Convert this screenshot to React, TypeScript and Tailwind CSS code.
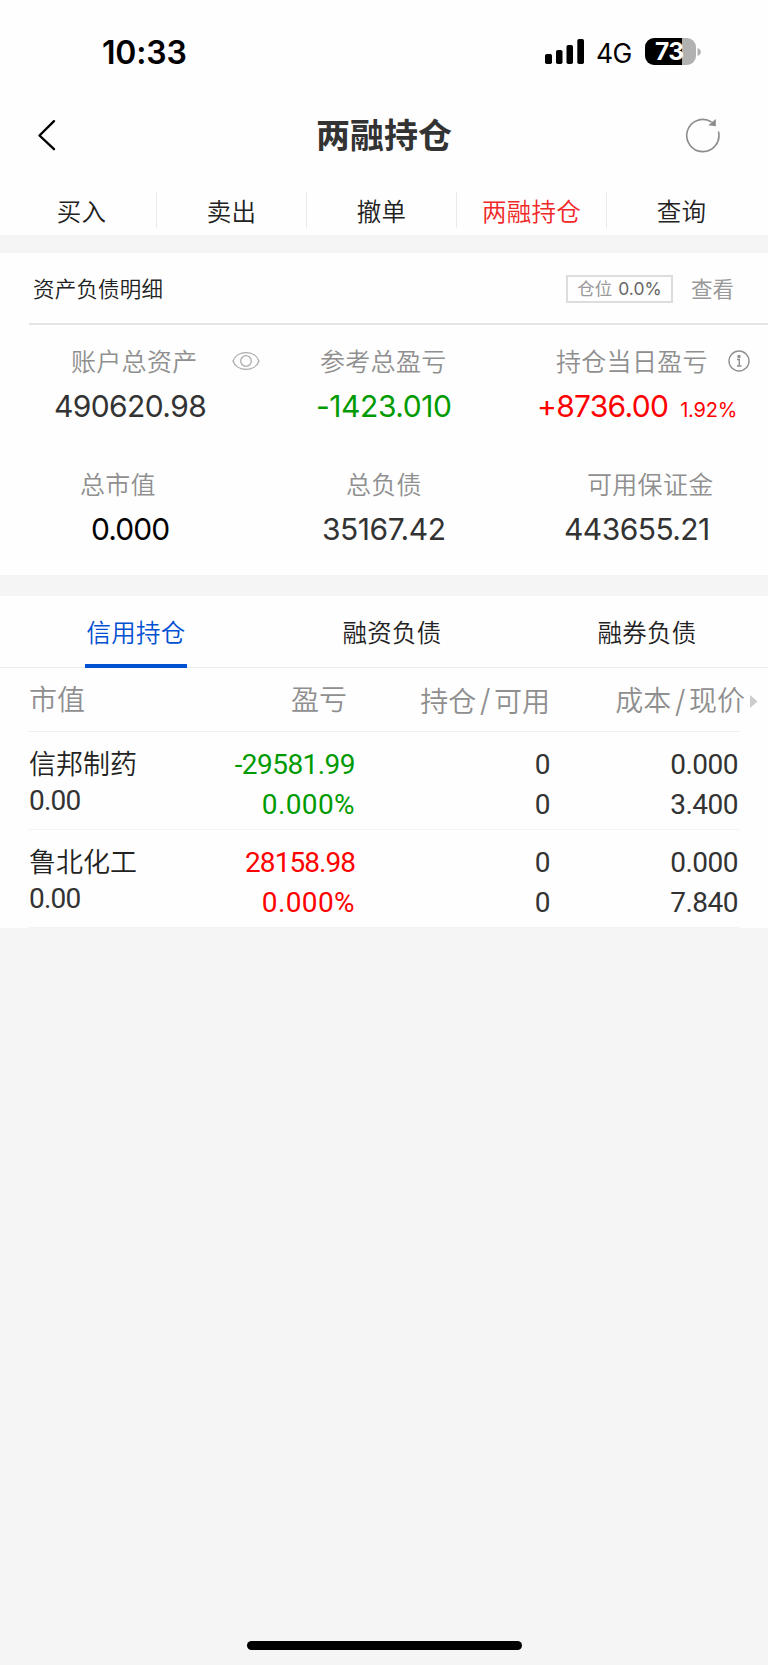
import { ReactNode } from "react";

const actions = ["买入", "卖出", "撤单", "两融持仓", "查询"];

const holdings = [
  { name: "信邦制药", value: "0.00", profit: "-29581.99", profitTracking: "tracking-[-0.550px]", rate: "0.000%", held: "0", usable: "0", cost: "0.000", price: "3.400", tone: "text-[#009b00]" },
  { name: "鲁北化工", value: "0.00", profit: "28158.98", profitTracking: "tracking-[-0.950px]", rate: "0.000%", held: "0", usable: "0", cost: "0.000", price: "7.840", tone: "text-[#ff0000]" },
];

function StatusBar() {
  return (
    <div className="flex h-[105px] items-start pl-[102px] pt-[32px]">
      <div className="w-[443px] text-[32px] font-semibold leading-[42px] tracking-[-0.200px] text-black">10:33</div>
      <svg className="mt-[7px] shrink-0" width="39" height="25" viewBox="0 0 39 25">
        <rect x="0" y="15" width="7" height="10" rx="1.8" />
        <rect x="11" y="11" width="6.5" height="14" rx="1.8" />
        <rect x="21.5" y="6" width="6.5" height="19" rx="1.8" />
        <rect x="32.3" y="0" width="6.7" height="25" rx="1.8" />
      </svg>
      <div className="ml-[12px] w-[49px] text-[26.500px] leading-[43px] tracking-[-0.5px] text-black">4G</div>
      <div className="mt-[6px] h-[27px] w-[51px] shrink-0 rounded-[9px] bg-[linear-gradient(to_right,#000_37px,#b1b1b1_37px)] pl-[10px] text-[24.500px] font-bold leading-[27px] tracking-[-0.500px] text-white">
        73
      </div>
      <svg className="ml-[1px] mt-[16px]" width="4" height="8" viewBox="0 0 4 8">
        <path d="M0.5 0C5 1.5 5 6.500 0.500 8Z" fill="#b1b1b1" />
      </svg>
    </div>
  );
}

function TitleBar() {
  return (
    <div className="flex h-[82px] items-start pl-[36px]">
      <svg className="mt-[13px]" width="20" height="34" viewBox="0 0 20 34" fill="none" stroke="#000" strokeWidth="2.400" strokeLinecap="round" strokeLinejoin="round">
        <path d="M18 3.200 3.500 17.500 18 31.200" />
      </svg>
      <h1 className="ml-[260px] w-[369px] text-[34px] font-bold leading-[62px] text-[#333]">两融持仓</h1>
      <svg className="mt-[13px]" width="36" height="36" viewBox="0 0 36 36" fill="none" stroke="#8c8c8c" strokeWidth="1.600">
        <path d="M33.400 13.500A16.100 16.100 0 1 1 26.500 4" />
        <path d="M30.800 1V8.300L23.300 7.300Z" fill="#8c8c8c" stroke="none" />
      </svg>
    </div>
  );
}

function Metric({ label, labelPad, valuePad, valueClass, icon, children }: { label: string; labelPad: string; valuePad: string; valueClass: string; icon?: ReactNode; children: ReactNode }) {
  return (
    <div className="w-[256px] shrink-0 whitespace-nowrap">
      <div className={`flex h-[40px] items-center text-[25px] font-[350] leading-[40px] tracking-[0.300px] text-[#8f8f8f] ${labelPad}`}>
        <span className="pt-[2px]">{label}</span>
        {icon}
      </div>
      <div className={`h-[48px] text-[30px] leading-[50px] ${valuePad} ${valueClass}`}>{children}</div>
    </div>
  );
}

function Eye() {
  return (
    <svg className="ml-[34px] shrink-0" width="28" height="20" viewBox="0 0 28 20" fill="none" stroke="#ababab" strokeWidth="1.300">
      <path d="M1 10C5-1.200 23-1.200 27 10 23 21.200 5 21.200 1 10Z" />
      <circle cx="14" cy="10" r="5.300" />
    </svg>
  );
}

function Info() {
  return (
    <svg className="ml-[20px] shrink-0" width="22" height="22" viewBox="0 0 22 22" fill="none" stroke="#909090" strokeWidth="1.400">
      <circle cx="11" cy="11" r="10" />
      <circle cx="11" cy="6.500" r="1.700" fill="#909090" stroke="none" />
      <path d="M9 9.500H11.300V16M9 16H13.500" />
    </svg>
  );
}

function Assets() {
  return (
    <section className="h-[322px] bg-[#fefefe]">
      <div className="ml-[29px] flex h-[72px] items-center border-b-2 border-[#e5e5e5] pl-[4px] pr-[34px] pt-[2px]">
        <h2 className="grow text-[21.500px] font-[350] tracking-[0.200px] text-[#222]">资产负债明细</h2>
        <div className="flex h-[28px] w-[107px] items-center justify-center gap-[6px] border-2 border-[#ddd] text-[17.500px] text-[#999]">
          <span>仓位</span>
          <span className="text-[#666]">0.0%</span>
        </div>
        <div className="ml-[18px] text-[21.500px] text-[#999]">查看</div>
      </div>
      <div className="flex pt-[16px]">
        <Metric label="账户总资产" labelPad="pl-[71px]" valuePad="pl-[54px]" valueClass="text-[#333] tracking-[-0.600px]" icon={<Eye />}>490620.98</Metric>
        <Metric label="参考总盈亏" labelPad="pl-[64px]" valuePad="pl-[60px]" valueClass="text-[#009b00] tracking-[-0.450px]">-1423.010</Metric>
        <Metric label="持仓当日盈亏" labelPad="pl-[44px]" valuePad="pl-[25px]" valueClass="text-[#ff0000] tracking-[-0.700px]" icon={<Info />}>
          +8736.00<span className="ml-[12px] text-[20px] tracking-[-0.200px]">1.92%</span>
        </Metric>
      </div>
      <div className="flex pt-[35px]">
        <Metric label="总市值" labelPad="pl-[80px]" valuePad="pl-[91px]" valueClass="text-black tracking-[-0.900px]">0.000</Metric>
        <Metric label="总负债" labelPad="pl-[90px]" valuePad="pl-[66px]" valueClass="text-[#333] tracking-[-0.450px]">35167.42</Metric>
        <Metric label="可用保证金" labelPad="pl-[75px]" valuePad="pl-[52px]" valueClass="text-[#333] tracking-[-0.550px]">443655.21</Metric>
      </div>
    </section>
  );
}

const columns = "grid grid-cols-[130px_196px_195px_189px]";

function Holdings() {
  return (
    <section className="mt-[21px] h-[332px] bg-[#fefefe]">
      <div className="flex h-[72px] border-b border-[#eee] pl-[85px] text-[24.500px] font-[350] leading-[74px] tracking-[0.200px] text-[#222]">
        <div className="h-[72px] w-[102px] whitespace-nowrap border-b-4 border-[#0050d2] text-center text-[#0050d2]">信用持仓</div>
        <div className="ml-[154px] w-[102px] whitespace-nowrap text-center">融资负债</div>
        <div className="ml-[153px] w-[102px] whitespace-nowrap text-center">融券负债</div>
      </div>
      <div className="ml-[29px] w-[710px]">
        <div className={`${columns} h-[64px] whitespace-nowrap border-b border-[#f0f0f0] text-[28px] font-[350] leading-[65px] text-[#8f8f8f]`}>
          <div>市值</div>
          <div className="pr-[8px] text-right">盈亏</div>
          <div className="text-right">持仓<span className="px-[3.500px] text-[31px]">/</span>可用</div>
          <div className="-mr-[19px] flex items-center justify-end">
            成本<span className="px-[3.500px] text-[31px]">/</span>现价
            <svg className="ml-[5px] shrink-0" width="8" height="13" viewBox="0 0 8 13">
              <path d="M0 0 7.500 6.500 0 13Z" fill="#ccc" />
            </svg>
          </div>
        </div>
        {holdings.map((h) => (
          <div key={h.name} className={`${columns} h-[98px] border-b border-[#f3f3f3] pt-[13px] font-[Roboto,'Noto_Sans_CJK_SC',sans-serif] text-[28px] text-[#333]`}>
            <div className="whitespace-nowrap">
              <div className="h-[38px] text-[27px] font-[350] leading-[41px] text-[#222]">{h.name}</div>
              <div className="leading-[36px] tracking-[-0.800px]">{h.value}</div>
            </div>
            <div className={`text-right leading-[40px] ${h.tone}`}>
              <div className={h.profitTracking}>{h.profit}</div>
              <div className="tracking-[0.400px]">{h.rate}</div>
            </div>
            <div className="text-right leading-[40px] tracking-[-0.400px]">
              <div>{h.held}</div>
              <div>{h.usable}</div>
            </div>
            <div className="pr-px text-right leading-[40px] tracking-[-0.500px]">
              <div>{h.cost}</div>
              <div>{h.price}</div>
            </div>
          </div>
        ))}
      </div>
    </section>
  );
}

export default function App() {
  return (
    <div className="flex h-[1665px] w-[768px] flex-col overflow-hidden bg-[#f5f5f5] font-[Inter,'Noto_Sans_CJK_SC',sans-serif]">
      <header className="h-[235px] shrink-0 bg-[#fefefe]">
        <StatusBar />
        <TitleBar />
        <nav className="flex px-[7px] pt-[5px]">
          {actions.map((a, i) => (
            <div key={a} className={`h-[36px] w-[150px] border-r text-center text-[24.500px] font-[350] leading-[40px] tracking-[0.200px] ${i === 4 ? "border-transparent" : "border-[#eaeaea]"} ${i === 3 ? "text-[#f02828]" : "text-[#222]"}`}>
              {a}
            </div>
          ))}
        </nav>
      </header>
      <main className="mt-[18px] grow">
        <Assets />
        <Holdings />
      </main>
      <div className="mx-auto mb-[15px] h-[9px] w-[275px] rounded-full bg-black" />
    </div>
  );
}
